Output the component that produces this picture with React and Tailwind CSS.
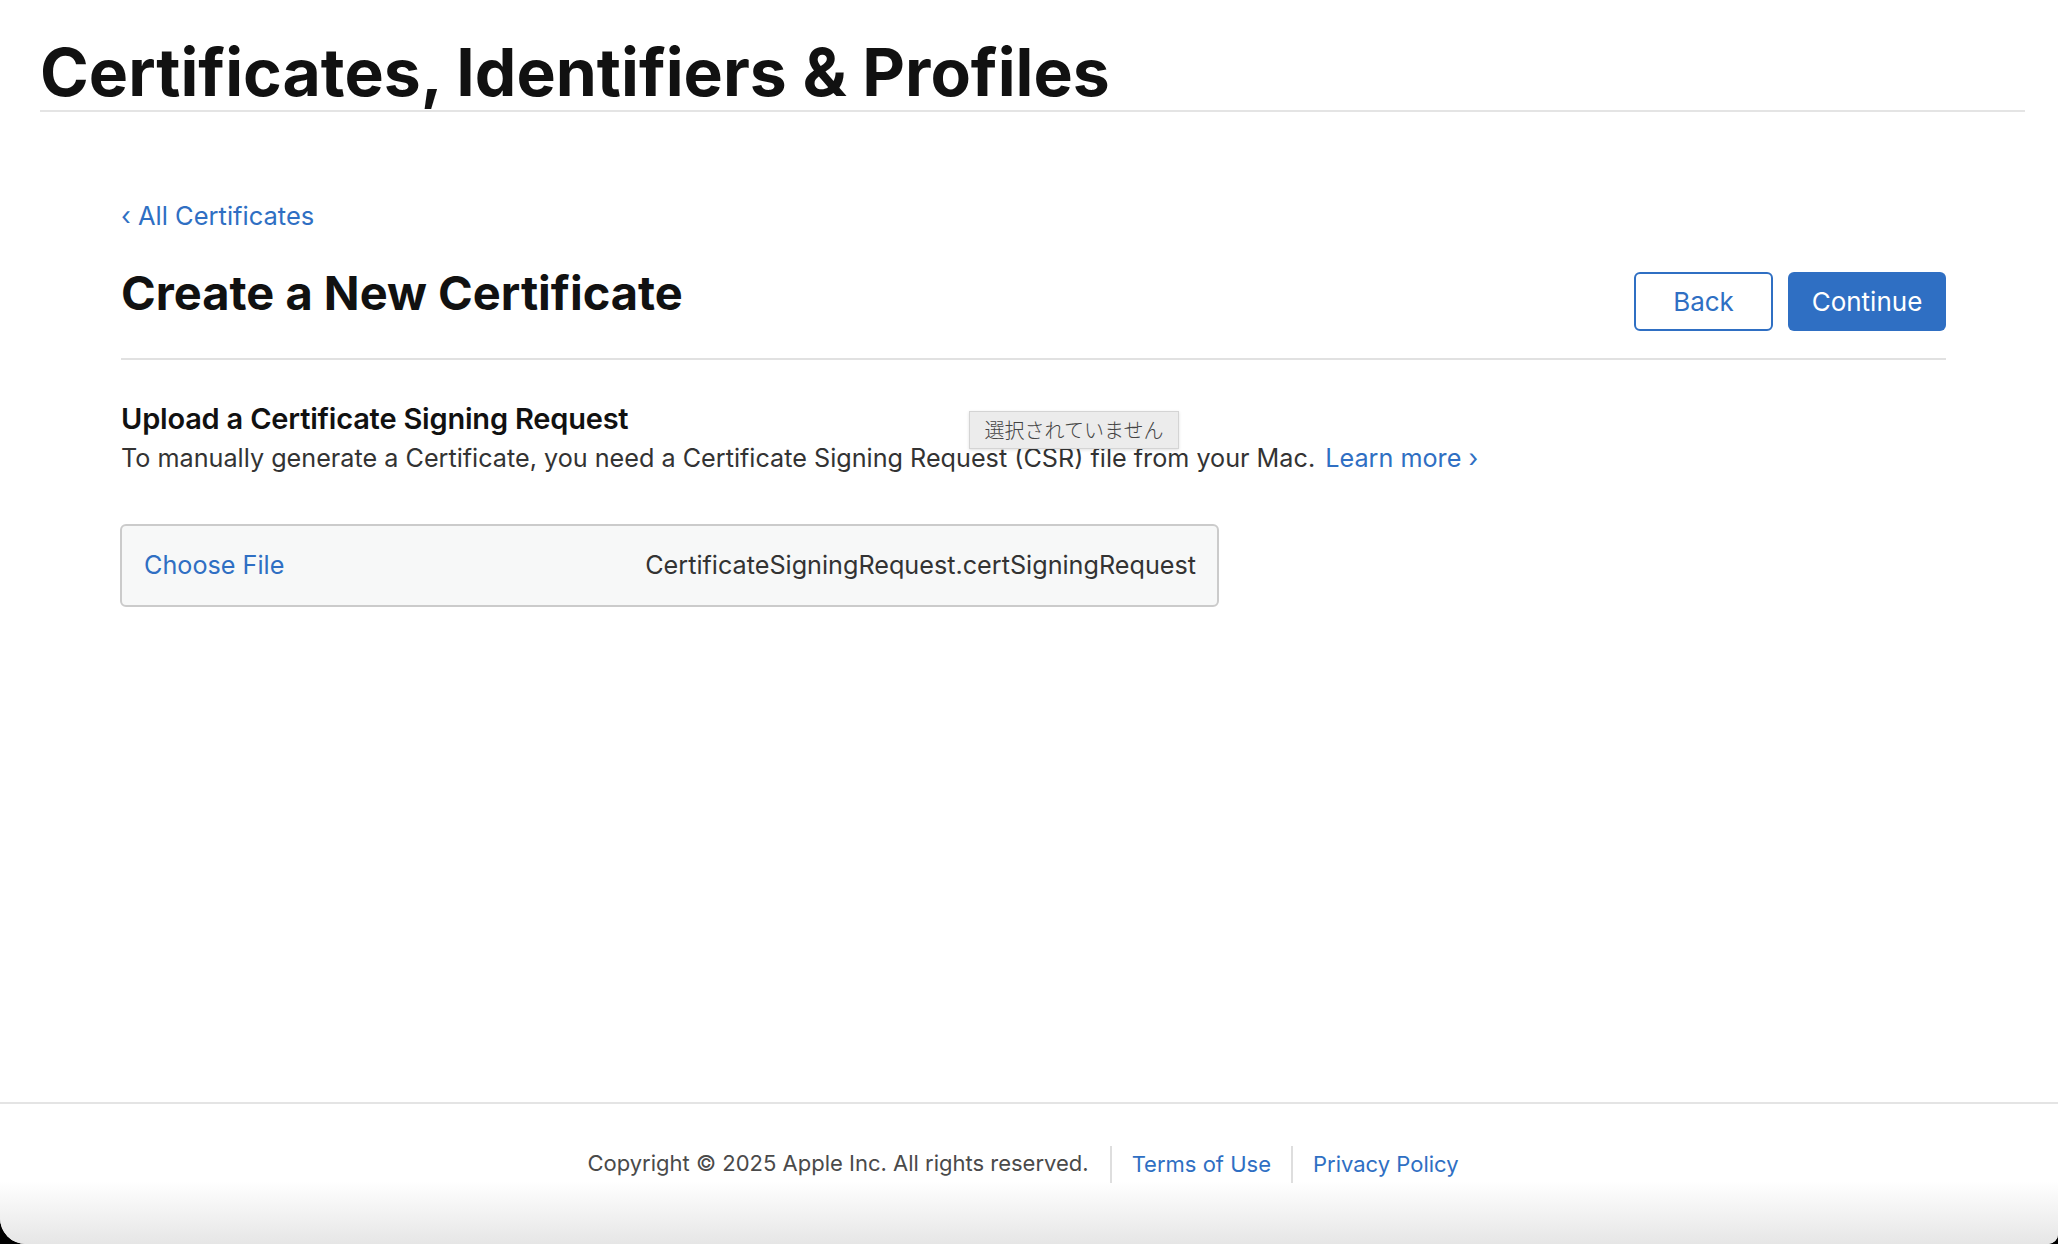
const BLUE = "text-[#2f6fc3]";

function Header() {
  return (
    <header className="pt-[40px] pl-[40px] pr-[33px]">
      <h1 className="text-[66px] leading-[64px] font-bold text-[#111] pb-[6px] border-b-2 border-[#e4e4e4]">
        Certificates, Identifiers &amp; Profiles
      </h1>
    </header>
  );
}

function TitleRow() {
  return (
    <div className="mt-[42px] flex items-start justify-between">
      <h2 className="text-[47px] leading-[42px] font-bold text-[#111]">
        Create a New Certificate
      </h2>
      <div className="flex gap-[15px]">
        <button className="w-[139px] h-[59px] rounded-[6px] border-2 border-[#2f6fc3] bg-white text-[26px] text-[#2f6fc3]">
          Back
        </button>
        <button className="w-[158px] h-[59px] rounded-[6px] bg-[#2f6fc3] text-[26px] text-white">
          Continue
        </button>
      </div>
    </div>
  );
}

function UploadSection() {
  return (
    <section className="relative mt-[42px]">
      <h3 className="text-[29px] leading-[34px] font-semibold text-[#111] tracking-[-0.2px]">
        Upload a Certificate Signing Request
      </h3>
      <p className="mt-[7px] text-[25.2px] leading-[30px] text-[#333]">
        To manually generate a Certificate, you need a Certificate Signing Request (CSR) file from your Mac.{" "}
        <a className={`${BLUE} ml-[3px]`}>Learn more ›</a>
      </p>

      {/* native file input title tooltip */}
      <div className="absolute left-[848px] top-[9px] w-[210px] h-[38px] flex items-center justify-center bg-[#ececec] border border-[#d4d4d4] shadow-[0_1px_3px_rgba(0,0,0,0.12)] text-[20px] font-light text-[#444] font-['Noto_Sans_CJK_JP',sans-serif]">
        選択されていません
      </div>

      <div className="mt-[51px] -ml-[1px] w-[1099px] h-[83px] flex items-center justify-between pl-[22px] pr-[21px] rounded-[6px] border-2 border-[#cbcbcb] bg-[#f7f8f8] text-[25.2px]">
        <span className={BLUE}>Choose File</span>
        <span className="text-[#333]">CertificateSigningRequest.certSigningRequest</span>
      </div>
    </section>
  );
}

function Footer() {
  return (
    <footer className="h-[142px] border-t-2 border-[#e4e4e4] bg-linear-to-b from-white from-55% to-[#e6e6e6] flex justify-center pt-[42px] pr-[12px]">
      <div className="flex items-start h-[37px] text-[22px]">
        <span className="text-[#4a4a4a] leading-[34px] pr-[21px]">
          Copyright © 2025 Apple Inc. All rights reserved.
        </span>
        <span className="w-[2px] h-[37px] bg-[#dedede]" />
        <a className={`${BLUE} leading-[37px] px-[20px]`}>Terms of Use</a>
        <span className="w-[2px] h-[37px] bg-[#dedede]" />
        <a className={`${BLUE} leading-[37px] pl-[20px]`}>Privacy Policy</a>
      </div>
    </footer>
  );
}

export default function App() {
  return (
    <div className="bg-black h-[1244px] font-['Inter',sans-serif]">
      <div className="h-full bg-white rounded-bl-[26px] rounded-br-[10px] overflow-hidden flex flex-col">
        <Header />
        <main className="flex-1 ml-[121px] mr-[112px]">
          <a className={`block mt-[90px] text-[25.5px] leading-[28px] ${BLUE}`}>‹ All Certificates</a>
          <TitleRow />
          <div className="mt-[27px] h-[2px] bg-[#e1e1e1]" />
          <UploadSection />
        </main>
        <Footer />
      </div>
    </div>
  );
}
